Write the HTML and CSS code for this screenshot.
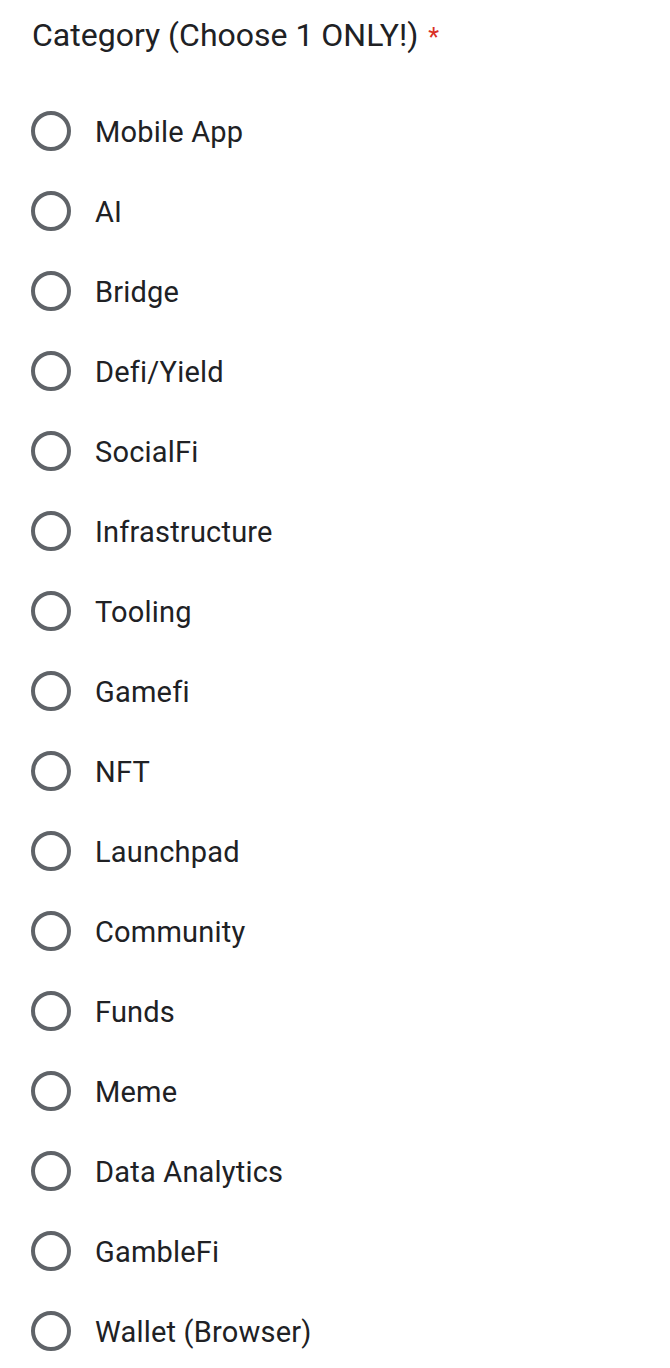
FILE: index.html
```html
<!DOCTYPE html>
<html>
<head>
<meta charset="utf-8">
<link rel="stylesheet" href="styles.css">
</head>
<body>
<div class="question">
  <div class="title">Category (Choose 1 ONLY!)<span class="req">*</span></div>
  <div class="options">
    <label class="opt"><span class="radio"></span><span class="label">Mobile App</span></label>
    <label class="opt"><span class="radio"></span><span class="label">AI</span></label>
    <label class="opt"><span class="radio"></span><span class="label">Bridge</span></label>
    <label class="opt"><span class="radio"></span><span class="label">Defi/Yield</span></label>
    <label class="opt"><span class="radio"></span><span class="label">SocialFi</span></label>
    <label class="opt"><span class="radio"></span><span class="label">Infrastructure</span></label>
    <label class="opt"><span class="radio"></span><span class="label">Tooling</span></label>
    <label class="opt"><span class="radio"></span><span class="label">Gamefi</span></label>
    <label class="opt"><span class="radio"></span><span class="label">NFT</span></label>
    <label class="opt"><span class="radio"></span><span class="label">Launchpad</span></label>
    <label class="opt"><span class="radio"></span><span class="label">Community</span></label>
    <label class="opt"><span class="radio"></span><span class="label">Funds</span></label>
    <label class="opt"><span class="radio"></span><span class="label">Meme</span></label>
    <label class="opt"><span class="radio"></span><span class="label">Data Analytics</span></label>
    <label class="opt"><span class="radio"></span><span class="label">GambleFi</span></label>
    <label class="opt"><span class="radio"></span><span class="label">Wallet (Browser)</span></label>
  </div>
</div>
</body>
</html>
```
FILE: styles.css
```css
html, body {
  margin: 0;
  padding: 0;
  background: #ffffff;
}
body {
  font-family: Roboto, "Liberation Sans", Arial, sans-serif;
  color: #202124;
}
.question {
  padding: 13px 0 0 32px;
}
.title {
  font-size: 32px;
  line-height: 44px;
  height: 44px;
}
.req {
  color: #d93025;
  font-size: 25px;
  line-height: 1;
  padding-left: 10px;
}
.options {
  margin-top: 34px;
  display: flex;
  flex-direction: column;
}
.opt {
  height: 80px;
  display: flex;
  align-items: center;
  margin-left: -1px;
}
.radio {
  box-sizing: border-box;
  width: 40px;
  height: 40px;
  border: 4px solid #5f6368;
  border-radius: 50%;
  flex: none;
}
.label {
  margin-left: 24px;
  padding-top: 1px;
  font-size: 29px;
  letter-spacing: 0.2px;
}
```
